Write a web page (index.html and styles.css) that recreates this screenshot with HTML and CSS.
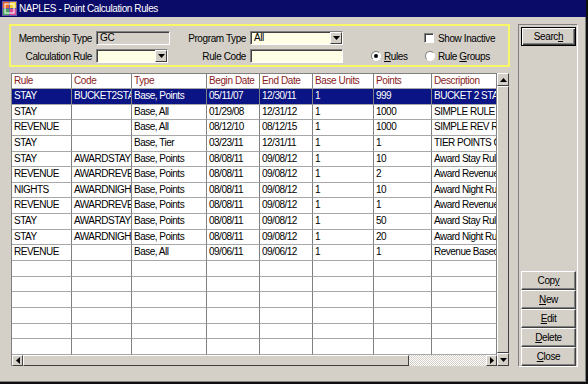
FILE: index.html
```html
<!DOCTYPE html>
<html lang="en">
<head>
  <meta charset="UTF-8">
  <title>NAPLES - Point Calculation Rules</title>
  <link rel="stylesheet" href="styles.css">
</head>
<body>
  <div class="window">
    <!-- Title Bar -->
    <div class="titlebar">
      <svg class="app-icon" width="15" height="15" viewBox="0 0 15 15">
        <rect x="0" y="0" width="15" height="15" fill="#6a5aa8"/>
        <rect x="1" y="1" width="6" height="6" fill="#e86a2a"/>
        <rect x="8" y="1" width="6" height="6" fill="#f2d23a"/>
        <rect x="1" y="8" width="6" height="6" fill="#4aa85a"/>
        <rect x="8" y="8" width="6" height="6" fill="#d84a9a"/>
        <rect x="3" y="3" width="9" height="9" fill="none" stroke="#fff" stroke-width="1"/>
      </svg>
      <span class="title">NAPLES - Point Calculation Rules</span>
    </div>

    <div class="client">
      <div class="main">
        <!-- Filter Panel -->
        <div class="filter">
          <div class="filter-row">
            <span class="lbl lbl-a">Membership Type</span>
            <div class="field field-a disabled">GC</div>
            <span class="lbl lbl-b">Program Type</span>
            <div class="field field-b combo">
              <span class="combo-text">All</span>
              <span class="drop-btn"><svg width="7" height="4" viewBox="0 0 7 4"><polygon points="0,0 7,0 3.5,4" fill="#000"/></svg></span>
            </div>
            <div class="check"><span class="check-box"></span>Show Inactive</div>
          </div>
          <div class="filter-row">
            <span class="lbl lbl-a">Calculation Rule</span>
            <div class="field field-c combo">
              <span class="combo-text"></span>
              <span class="drop-btn"><svg width="7" height="4" viewBox="0 0 7 4"><polygon points="0,0 7,0 3.5,4" fill="#000"/></svg></span>
            </div>
            <span class="lbl lbl-b">Rule Code</span>
            <div class="field field-b"></div>
            <div class="radio radio-rules"><span class="radio-dot on"></span><span><u>R</u>ules</span></div>
            <div class="radio"><span class="radio-dot"></span><span>Rule <u>G</u>roups</span></div>
          </div>
        </div>

        <!-- Rules Grid -->
        <div class="grid-box">
          <div class="grid-main">
            <div class="grid-rows">
              <div class="grid-row head">
                <span>Rule</span><span>Code</span><span>Type</span><span>Begin Date</span><span>End Date</span><span>Base Units</span><span>Points</span><span>Description</span>
              </div>
              <div class="grid-row sel">
                <span>STAY</span><span>BUCKET2STAY</span><span>Base, Points</span><span>05/11/07</span><span>12/30/11</span><span>1</span><span>999</span><span>BUCKET 2 STAY RULE</span>
              </div>
              <div class="grid-row">
                <span>STAY</span><span></span><span>Base, All</span><span>01/29/08</span><span>12/31/12</span><span>1</span><span>1000</span><span>SIMPLE RULE 1</span>
              </div>
              <div class="grid-row">
                <span>REVENUE</span><span></span><span>Base, All</span><span>08/12/10</span><span>08/12/15</span><span>1</span><span>1000</span><span>SIMPLE REV RULE</span>
              </div>
              <div class="grid-row">
                <span>STAY</span><span></span><span>Base, Tier</span><span>03/23/11</span><span>12/31/11</span><span>1</span><span>1</span><span>TIER POINTS GOLD</span>
              </div>
              <div class="grid-row">
                <span>STAY</span><span>AWARDSTAY1</span><span>Base, Points</span><span>08/08/11</span><span>09/08/12</span><span>1</span><span>10</span><span>Award Stay Rule</span>
              </div>
              <div class="grid-row">
                <span>REVENUE</span><span>AWARDREVENUE</span><span>Base, Points</span><span>08/08/11</span><span>09/08/12</span><span>1</span><span>2</span><span>Award Revenue Rule</span>
              </div>
              <div class="grid-row">
                <span>NIGHTS</span><span>AWARDNIGHTS</span><span>Base, Points</span><span>08/08/11</span><span>09/08/12</span><span>1</span><span>10</span><span>Award Night Rule</span>
              </div>
              <div class="grid-row">
                <span>REVENUE</span><span>AWARDREVENUE2</span><span>Base, Points</span><span>08/08/11</span><span>09/08/12</span><span>1</span><span>1</span><span>Award Revenue Rule</span>
              </div>
              <div class="grid-row">
                <span>STAY</span><span>AWARDSTAY2</span><span>Base, Points</span><span>08/08/11</span><span>09/08/12</span><span>1</span><span>50</span><span>Award Stay Rule</span>
              </div>
              <div class="grid-row">
                <span>STAY</span><span>AWARDNIGHT2</span><span>Base, Points</span><span>08/08/11</span><span>09/08/12</span><span>1</span><span>20</span><span>Award Night Rule</span>
              </div>
              <div class="grid-row">
                <span>REVENUE</span><span></span><span>Base, All</span><span>09/06/11</span><span>09/06/12</span><span>1</span><span>1</span><span>Revenue Based Rule</span>
              </div>
              <div class="grid-row"><span></span><span></span><span></span><span></span><span></span><span></span><span></span><span></span></div>
              <div class="grid-row"><span></span><span></span><span></span><span></span><span></span><span></span><span></span><span></span></div>
              <div class="grid-row"><span></span><span></span><span></span><span></span><span></span><span></span><span></span><span></span></div>
              <div class="grid-row"><span></span><span></span><span></span><span></span><span></span><span></span><span></span><span></span></div>
              <div class="grid-row"><span></span><span></span><span></span><span></span><span></span><span></span><span></span><span></span></div>
              <div class="grid-row"><span></span><span></span><span></span><span></span><span></span><span></span><span></span><span></span></div>
            </div>
            <div class="hscroll">
              <span class="sb-btn"><svg width="4" height="7" viewBox="0 0 4 7"><polygon points="4,0 4,7 0,3.5" fill="#000"/></svg></span>
              <span class="sb-thumb h-thumb"></span>
              <span class="sb-track"></span>
              <span class="sb-btn"><svg width="4" height="7" viewBox="0 0 4 7"><polygon points="0,0 0,7 4,3.5" fill="#000"/></svg></span>
            </div>
          </div>
          <div class="vscroll">
            <span class="sb-btn v-btn"><svg width="7" height="4" viewBox="0 0 7 4"><polygon points="0,4 7,4 3.5,0" fill="#000"/></svg></span>
            <span class="sb-thumb v-thumb"></span>
            <span class="sb-btn v-btn"><svg width="7" height="4" viewBox="0 0 7 4"><polygon points="0,0 7,0 3.5,4" fill="#000"/></svg></span>
          </div>
        </div>
      </div>

      <!-- Button Panel -->
      <div class="side">
        <button class="btn btn-default">Searc<u>h</u></button>
        <div class="side-bottom">
          <button class="btn">Cop<u>y</u></button>
          <button class="btn"><u>N</u>ew</button>
          <button class="btn"><u>E</u>dit</button>
          <button class="btn"><u>D</u>elete</button>
          <button class="btn"><u>C</u>lose</button>
        </div>
      </div>
    </div>
  </div>
</body>
</html>
```

FILE: styles.css
```css
/* Reset */
* {
  margin: 0;
  padding: 0;
  box-sizing: border-box;
}

body {
  font-family: "Liberation Sans", Arial, sans-serif;
  font-size: 10px;
  letter-spacing: -0.4px;
  color: #000;
  background: #d4d0c8;
}

/* Window Frame */
.window {
  width: 588px;
  height: 384px;
  background: #d4d0c8;
  border-right: 2px solid #101010;
  border-bottom: 2px solid #101010;
  box-shadow: inset -1px -1px 0 #808080;
  display: flex;
  flex-direction: column;
}

.titlebar {
  height: 17px;
  background: #0a0a68;
  color: #fff;
  display: flex;
  align-items: center;
  padding-left: 2px;
  gap: 2px;
}

.app-icon {
  display: block;
}

.title {
  font-size: 10px;
  letter-spacing: -0.4px;
}

.client {
  display: flex;
  flex: 1;
  padding: 7px 0 0 9px;
  gap: 8px;
}

.main {
  width: 501px;
  display: flex;
  flex-direction: column;
}

/* Filter Panel */
.filter {
  height: 43px;
  border: 2px solid #f8f866;
  padding-top: 5px;
  display: flex;
  flex-direction: column;
  gap: 4px;
}

.filter-row {
  display: flex;
  align-items: center;
  height: 14px;
}

.lbl {
  text-align: right;
  padding-right: 4px;
  white-space: nowrap;
}

.lbl-a {
  width: 85px;
}

.lbl-b {
  width: 80px;
}

.field {
  height: 14px;
  border: 1px solid;
  border-color: #808080 #fff #fff #808080;
  box-shadow: inset 1px 1px 0 #404040;
  background: #ffffe6;
  padding-left: 3px;
  line-height: 12px;
}

.field-a {
  width: 74px;
}

.field-b {
  width: 93px;
}

.field-c {
  width: 72px;
  margin-right: 2px;
}

.disabled {
  background: #d4d0c8;
}

.combo {
  display: flex;
  padding-right: 0;
}

.combo-text {
  flex: 1;
}

.drop-btn {
  width: 12px;
  height: 12px;
  background: #d4d0c8;
  border: 1px solid;
  border-color: #fff #404040 #404040 #fff;
  display: flex;
  align-items: center;
  justify-content: center;
}

.drop-btn svg {
  display: block;
}

.check {
  display: flex;
  align-items: center;
  gap: 4px;
  margin-left: 81px;
}

.check-box {
  width: 10px;
  height: 10px;
  background: #fff;
  border: 1px solid;
  border-color: #808080 #fff #fff #808080;
  box-shadow: inset 1px 1px 0 #404040;
}

.radio {
  display: flex;
  align-items: center;
  gap: 3px;
}

.radio-rules {
  width: 54px;
  margin-left: 28px;
}

.radio-dot {
  width: 10px;
  height: 10px;
  border-radius: 50%;
  background: #fff;
  border: 1px solid;
  border-color: #808080 #fff #fff #808080;
  display: flex;
  align-items: center;
  justify-content: center;
}

.radio-dot.on::after {
  content: "";
  width: 4px;
  height: 4px;
  border-radius: 50%;
  background: #000;
}

/* Grid */
.grid-box {
  display: flex;
  margin: 6px 0 0 2px;
  width: 498px;
  height: 293px;
}

.grid-main {
  width: 486px;
  border-left: 1px solid #808080;
  border-top: 1px solid #808080;
  display: flex;
  flex-direction: column;
  background: #fff;
}

.grid-rows {
  height: 281px;
  overflow: hidden;
}

.grid-row {
  display: grid;
  grid-template-columns: 60px 60px 75px 53px 53px 61px 58px 65px;
  height: 15.65px;
}

.grid-row span {
  border-right: 1px solid #808080;
  border-bottom: 1px solid #a8a8a8;
  padding-left: 2px;
  white-space: nowrap;
  overflow: hidden;
  line-height: 14px;
  letter-spacing: -0.5px;
}

.grid-row.head {
  height: 15px;
}

.head span {
  color: #8a1c1c;
  letter-spacing: -0.4px;
}

.sel span {
  background: #0a1484;
  color: #fff;
}

/* Scrollbars */
.hscroll {
  height: 11px;
  display: flex;
}

.sb-btn {
  width: 11px;
  background: #d4d0c8;
  border: 1px solid;
  border-color: #fff #404040 #404040 #fff;
  display: flex;
  align-items: center;
  justify-content: center;
}

.sb-btn svg {
  display: block;
}

.sb-thumb {
  background: #d4d0c8;
  border: 1px solid;
  border-color: #fff #404040 #404040 #fff;
}

.h-thumb {
  width: 386px;
}

.sb-track {
  flex: 1;
  background-color: #d4d0c8;
  background-image: repeating-conic-gradient(#fff 0 25%, #d4d0c8 0 50%);
  background-size: 2px 2px;
}

.vscroll {
  width: 12px;
  display: flex;
  flex-direction: column;
}

.v-btn {
  width: 12px;
  height: 13px;
}

.v-thumb {
  flex: 1;
}

/* Button Panel */
.side {
  width: 60px;
  height: 343px;
  border: 1px solid;
  border-color: #808080 #fff #fff #808080;
  padding: 2px 1px 0 2px;
  display: flex;
  flex-direction: column;
  justify-content: space-between;
}

.side-bottom {
  display: flex;
  flex-direction: column;
}

.btn {
  width: 55px;
  height: 19px;
  font-family: inherit;
  font-size: 10px;
  letter-spacing: -0.4px;
  color: #000;
  background: #d4d0c8;
  border: 1px solid;
  border-color: #fff #404040 #404040 #fff;
  box-shadow: inset -1px -1px 0 #808080;
  text-align: center;
}

.btn-default {
  border: 1px solid #000;
  box-shadow: inset 1px 1px 0 #fff, inset -1px -1px 0 #404040, inset -2px -2px 0 #808080;
}
```
